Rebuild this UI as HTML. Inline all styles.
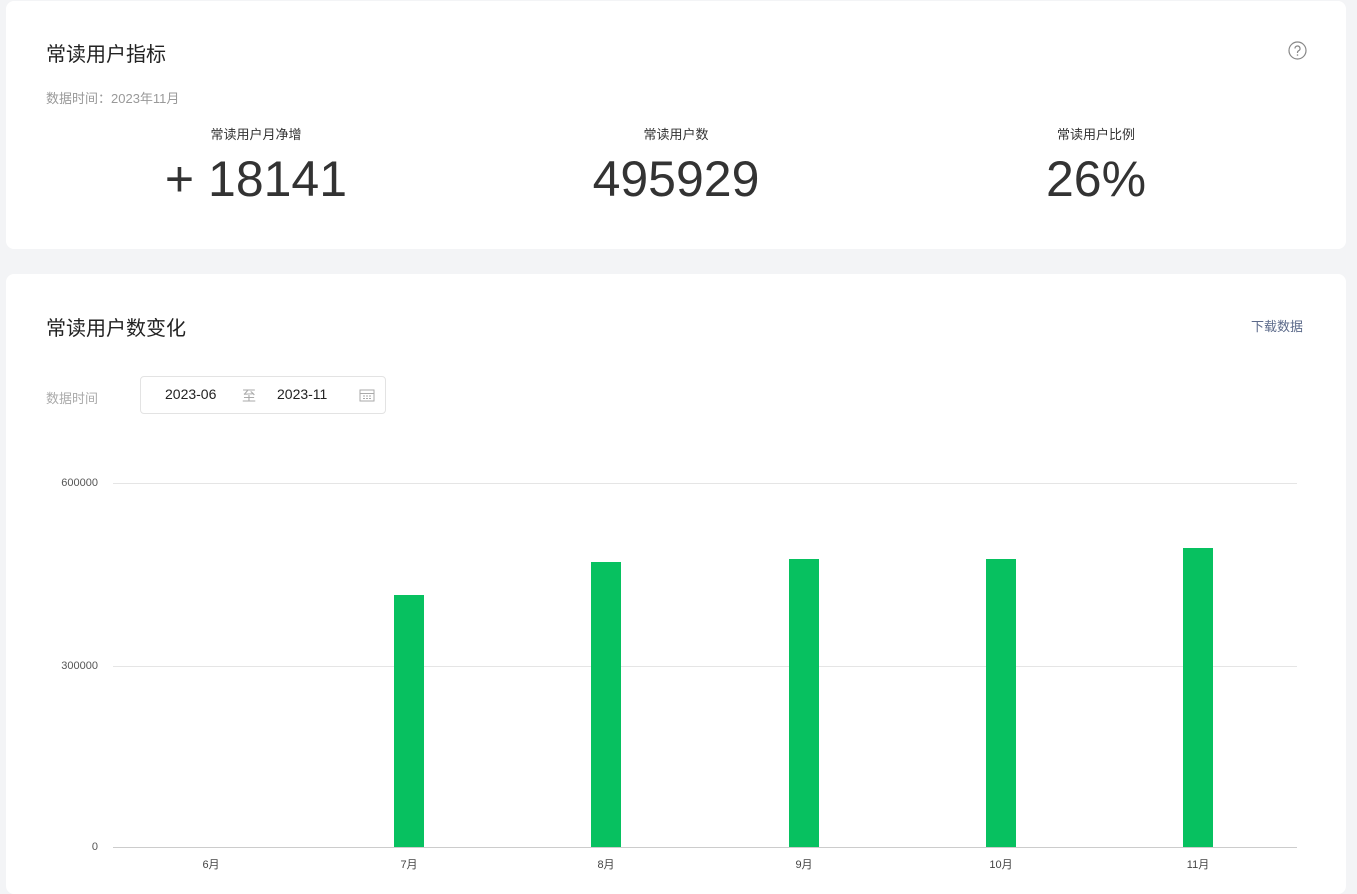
<!DOCTYPE html>
<html><head><meta charset="utf-8"><style>
body{margin:0;background:#f3f4f6;width:1357px;height:884px;overflow:hidden;font-family:"Liberation Sans","Noto Sans CJK SC",sans-serif;color:#222;position:relative}
.card{position:absolute;left:6px;width:1340px;background:#fff;border-radius:8px}
.abs{position:absolute;white-space:nowrap}
.lbl{font-size:13px;color:#333;text-align:center;width:300px}
.big{font-size:50px;color:#333;text-align:center;width:400px;font-weight:300}
.yl{font-size:11px;color:#555;text-align:right;width:60px}
.xl{font-size:11px;color:#444;text-align:center;width:60px}
.bar{position:absolute;background:#07c160;width:30px}
.grid{position:absolute;left:113px;width:1184px;height:1px;background:#e5e5e5}
</style></head><body>
<div class="card" style="top:1px;height:248px"></div>
<div class="card" style="top:274px;height:620px"></div>
<div class="abs" style="left:46px;top:38px;font-size:20px;color:#222">常读用户指标</div>
<svg class="abs" style="left:1288px;top:41px" width="19" height="19" viewBox="0 0 19 19"><circle cx="9.5" cy="9.5" r="8.5" fill="none" stroke="#888" stroke-width="1.2"/><path d="M7 7.5a2.5 2.5 0 1 1 3.5 2.3c-.7.4-1 .8-1 1.6v.6" fill="none" stroke="#888" stroke-width="1.2"/><circle cx="9.5" cy="14" r=".8" fill="#888"/></svg>
<div class="abs" style="left:46px;top:88px;font-size:13px;color:#999">数据时间：2023年11月</div>
<div class="abs lbl" style="left:106px;top:124px">常读用户月净增</div>
<div class="abs lbl" style="left:526px;top:124px">常读用户数</div>
<div class="abs lbl" style="left:946px;top:124px">常读用户比例</div>
<div class="abs big" style="left:56px;top:150px">+ 18141</div>
<div class="abs big" style="left:476px;top:150px">495929</div>
<div class="abs big" style="left:896px;top:150px">26%</div>
<div class="abs" style="left:46px;top:312px;font-size:20px;color:#222">常读用户数变化</div>
<div class="abs" style="left:1251px;top:316px;font-size:13px;color:#5c6a8a">下载数据</div>
<div class="abs" style="left:46px;top:388px;font-size:13px;color:#aaa">数据时间</div>
<div class="abs" style="left:140px;top:376px;width:244px;height:36px;border:1px solid #e3e3e3;border-radius:4px"></div>
<div class="abs" style="left:165px;top:386px;font-size:14px;color:#222">2023-06</div>
<div class="abs" style="left:242px;top:386px;font-size:14px;color:#aaa">至</div>
<div class="abs" style="left:277px;top:386px;font-size:14px;color:#222">2023-11</div>
<svg class="abs" style="left:359px;top:388px" width="16" height="14" viewBox="0 0 16 14"><rect x="1" y="2" width="14" height="11" fill="none" stroke="#aaa"/><line x1="1" y1="5.5" x2="15" y2="5.5" stroke="#aaa"/><path d="M4 8h2M7 8h2M10 8h2M4 10.5h2M7 10.5h2M10 10.5h2" stroke="#aaa"/></svg>
<div class="grid" style="top:483px"></div>
<div class="grid" style="top:666px"></div>
<div class="grid" style="top:847px;background:#ccc"></div>
<div class="abs yl" style="left:38px;top:477px">600000</div>
<div class="abs yl" style="left:38px;top:660px">300000</div>
<div class="abs yl" style="left:38px;top:841px">0</div>
<div class="bar" style="left:394px;top:595px;height:252px"></div>
<div class="bar" style="left:591px;top:562px;height:285px"></div>
<div class="bar" style="left:789px;top:559px;height:288px"></div>
<div class="bar" style="left:986px;top:559px;height:288px"></div>
<div class="bar" style="left:1183px;top:548px;height:299px"></div>
<div class="abs xl" style="left:181px;top:856px">6月</div>
<div class="abs xl" style="left:379px;top:856px">7月</div>
<div class="abs xl" style="left:576px;top:856px">8月</div>
<div class="abs xl" style="left:774px;top:856px">9月</div>
<div class="abs xl" style="left:971px;top:856px">10月</div>
<div class="abs xl" style="left:1168px;top:856px">11月</div>
</body></html>
